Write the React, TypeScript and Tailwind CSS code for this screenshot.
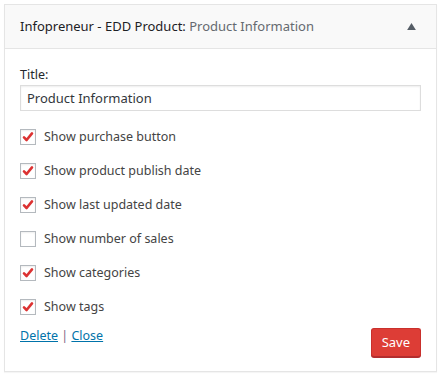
import { useState } from "react";

const options = [
  { label: "Show purchase button", checked: true },
  { label: "Show product publish date", checked: true },
  { label: "Show last updated date", checked: true },
  { label: "Show number of sales", checked: false },
  { label: "Show categories", checked: true },
  { label: "Show tags", checked: true },
];

function Check({ on, onClick }: { on: boolean; onClick: () => void }) {
  return (
    <button
      onClick={onClick}
      className="relative w-4 h-4 shrink-0 border border-[#b4b9be] bg-white shadow-[inset_0_1px_2px_rgba(0,0,0,0.07)]"
    >
      {on && (
        <svg viewBox="0 0 16 16" className="absolute -left-[1px] -top-[1px] w-4 h-4">
          <path d="M4 8.4 L6.6 11 L12 4.4" fill="none" stroke="#dc3232" strokeWidth="2.6" strokeLinecap="round" strokeLinejoin="round" />
        </svg>
      )}
    </button>
  );
}

export default function App() {
  const [checks, setChecks] = useState(options.map((o) => o.checked));
  const [title, setTitle] = useState("Product Information");

  return (
    <div className="w-[441px] h-[377px] bg-white p-1 font-['Noto_Sans',sans-serif] text-[12.5px] text-[#444]">
      <div className="border border-[#e5e5e5] bg-white shadow-[0_1px_1px_rgba(0,0,0,0.04)]">
        {/* header */}
        <div className="h-11 flex items-center justify-between pl-[15px] pr-[20px] bg-[#f9f9f9] border-b border-[#e5e5e5]">
          <h3 className="text-[#1d2125] font-normal text-[13px]">
            Infopreneur - EDD Product: <span className="text-[#656a70]">Product Information</span>
          </h3>
          <svg viewBox="0 0 10 8" className="w-[9px] h-[7px]">
            <path d="M0 8 L5 0 L10 8 Z" fill="#555d66" />
          </svg>
        </div>

        {/* body */}
        <div className="px-[15px] pt-[18px] pb-[14px]">
          <label className="block leading-4 mb-[2px] text-[#23282d]">Title:</label>
          <input
            value={title}
            onChange={(e) => setTitle(e.target.value)}
            className="w-full h-[26px] px-[6px] border border-[#ddd] text-[#32373c] text-[13px] shadow-[inset_0_1px_2px_rgba(0,0,0,0.07)] outline-none"
          />

          <div className="mt-[18px] flex flex-col gap-[18px]">
            {options.map((o, i) => (
              <div key={o.label} className="flex items-center gap-2 h-4">
                <Check on={checks[i]} onClick={() => setChecks(checks.map((c, j) => (j === i ? !c : c)))} />
                <span className="text-[#444]">{o.label}</span>
              </div>
            ))}
          </div>

          <div className="mt-[12px] flex items-start justify-between">
            <div>
              <a href="#" className="text-[#0073aa] underline">Delete</a>
              <span className="text-[#82698a]"> | </span>
              <a href="#" className="text-[#0073aa] underline">Close</a>
            </div>
            <button className="mt-[1px] h-[29px] px-[10px] rounded-[3px] bg-[#dd3d36] border border-[#c9302c] border-b-[#b32d2e] shadow-[0_1px_0_#b32d2e] text-white text-[13px]">
              Save
            </button>
          </div>
        </div>
      </div>
    </div>
  );
}
